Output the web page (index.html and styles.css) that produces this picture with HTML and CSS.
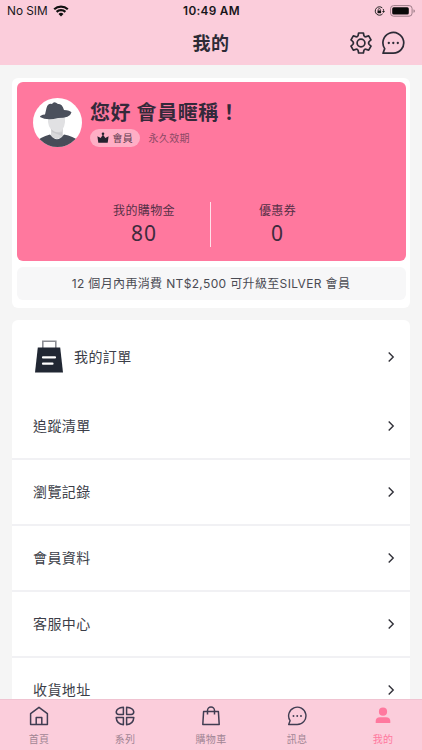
FILE: index.html
```html
<!DOCTYPE html>
<html lang="zh-Hant">
<head>
<meta charset="utf-8">
<title>我的</title>
<link rel="stylesheet" href="styles.css">
</head>
<body>
<svg class="defs" width="0" height="0">
  <symbol id="chat" viewBox="0 0 24 24"><path d="M12.3 22.2A10.4 10.4 0 1 0 3.7 17.6L2 22.2Z" fill="none" stroke="currentColor" stroke-width="1.7" stroke-linejoin="round"/><g fill="currentColor"><circle cx="7.8" cy="12" r="1.15"/><circle cx="12.3" cy="12" r="1.15"/><circle cx="16.8" cy="12" r="1.15"/></g></symbol>
  <symbol id="chevron" viewBox="0 0 8 12"><path d="M1.7 1.6L6.2 6L1.7 10.4" fill="none" stroke="currentColor" stroke-width="1.4"/></symbol>
</svg>
<div class="screen">
  <header class="header">
    <div class="status">
      <div class="carrier"><span>No SIM</span>
        <svg width="16" height="12" viewBox="0 0 16 12"><path d="M1.2 4.3a9.8 9.8 0 0 1 13.6 0M3.6 6.9a6.3 6.3 0 0 1 8.8 0" fill="none" stroke="#111" stroke-width="2.2"/><path d="M5.5 9a3.7 3.7 0 0 1 5 0L8 11.6z" fill="#111"/></svg>
      </div>
      <div class="time">10:49 AM</div>
      <div class="power">
        <svg width="11" height="10" viewBox="0 0 11 10"><path d="M8.3 1.9A4.2 4.2 0 1 0 8.6 7.8M9.3 3.1a4.2 4.2 0 0 1 .2 2.5" fill="none" stroke="#222" stroke-width="1"/><path d="M8 5h3L9.5 7z" fill="#222"/><rect x="3.5" y="4.5" width="3.6" height="2.7" fill="#111"/><path d="M4.2 4.7V3.6a1.1 1.1 0 0 1 2.2 0v1.1" fill="none" stroke="#111" stroke-width=".7"/></svg>
        <svg width="26" height="12" viewBox="0 0 26 12"><rect x=".6" y=".6" width="21.5" height="10.6" rx="3" fill="none" stroke="#9b7b87"/><rect x="2.2" y="2.2" width="16.6" height="7.4" rx="1.5" fill="#080808"/><path d="M23.5 4.2q1.4.4 1.4 1.8t-1.4 1.8z" fill="#9b7b87"/></svg>
      </div>
    </div>
    <div class="navbar">
      <h1>我的</h1>
      <div class="actions">
        <svg width="22" height="22" viewBox="0 0 22 22" fill="none" stroke="currentColor" stroke-width="1.7" stroke-linejoin="round"><path d="M8.6 1H13.4L13.9 3.7Q14.8 5.3 16.3 4.6L18.7 3.8L21 7.8L19.2 9.5Q18 11 19.2 12.5L21 14.2L18.7 18.2L16.3 17.4Q14.8 16.7 13.9 18.3L13.4 21H8.6L8.1 18.3Q7.2 16.7 5.7 17.4L3.3 18.2L1 14.2L2.8 12.5Q4 11 2.8 9.5L1 7.8L3.3 3.8L5.7 4.6Q7.2 5.3 8.1 3.7Z"/><circle cx="11" cy="11" r="3.9"/></svg>
        <svg width="24" height="24"><use href="#chat"/></svg>
      </div>
    </div>
  </header>
  <main class="content">
    <section class="member">
      <div class="hero">
        <div class="profile">
          <svg class="avatar" width="49" height="49" viewBox="0 0 49 49"><defs><clipPath id="round"><circle cx="24.5" cy="24.5" r="24.5"/></clipPath></defs><g clip-path="url(#round)"><path fill="#fff" d="M0 0h49v49H0z"/><path d="M18 30h12v8q-6 6-12 0z" fill="#d8d8da"/><path d="M15 17H32V24Q31 34 24 34.5Q16 33 15 24Z" fill="#e1e1e3"/><path d="M18 31q5 5 11 3v4l-10-4z" fill="#cacacd"/><path d="M3 44Q7 39 17 36.5Q24 46 31 36.5Q40 38 46 43V49H3Z" fill="#474c58"/><path d="M7 19Q7 17 12 16.5L13.5 10Q15 5 19 6Q21 2.5 25 6Q29 5 31 12Q37 12 38.5 14.5Q37 20 25 20Q14 23 7 19Z" fill="#4b505c"/></g></svg>
          <div class="identity">
            <div class="greeting">您好 會員暱稱！</div>
            <div class="level">
              <span class="badge"><svg width="12" height="12" viewBox="0 0 12 12" fill="#24212e"><circle cx="6" cy="1.8" r="1.3"/><path d="M.4 4.2L3.7 6L6 2.6L8.3 6L11.6 4.2L10.7 10.8H1.3z"/></svg>會員</span>
              <span class="valid">永久效期</span>
            </div>
          </div>
        </div>
        <div class="stats">
          <div class="stat"><span>我的購物金</span><b>80</b></div>
          <div class="stat"><span>優惠券</span><b>0</b></div>
        </div>
      </div>
      <div class="notice">12 個月內再消費 NT$2,500 可升級至SILVER 會員</div>
    </section>
    <nav class="list">
      <a class="row orders"><svg class="bag" width="28" height="33" viewBox="0 0 28 33"><path d="M7.8 8V1.2h13V8" fill="none" stroke="#8c8e94" stroke-width="1.6"/><path d="M2.8 7.5H25.2L28 32.5H0Z" fill="#212733"/><path d="M8 17.4h12M8 23.7h9.5" stroke="#fff" stroke-width="2.2" stroke-linecap="round"/></svg><span>我的訂單</span><svg class="go"><use href="#chevron"/></svg></a>
      <a class="row"><span>追蹤清單</span><svg class="go"><use href="#chevron"/></svg></a>
      <a class="row"><span>瀏覽記錄</span><svg class="go"><use href="#chevron"/></svg></a>
      <a class="row"><span>會員資料</span><svg class="go"><use href="#chevron"/></svg></a>
      <a class="row"><span>客服中心</span><svg class="go"><use href="#chevron"/></svg></a>
      <a class="row"><span>收貨地址</span><svg class="go"><use href="#chevron"/></svg></a>
    </nav>
  </main>
  <footer class="tabs">
    <a class="tab"><svg width="20" height="20" viewBox="0 0 20 20" fill="none" stroke="currentColor" stroke-width="1.5" stroke-linejoin="round"><path d="M1.6 18.5V7.7L10 1.3L18.4 7.7V18.5ZM7.2 18.5V11.5H12.8V18.5"/></svg><span>首頁</span></a>
    <a class="tab"><svg width="20" height="20" viewBox="0 0 20 20" fill="none" stroke="currentColor" stroke-width="1.5" stroke-linejoin="round"><path d="M8.4 8.4H3.8A2.6 2.6 0 0 1 1.2 5.800Q1.700 2 8.400 1.300ZM11.600 8.400V1.300Q18.300 2 18.800 5.800A2.600 2.600 0 0 1 16.200 8.400ZM8.400 11.600V18.700Q1.700 18.200 1.200 11.600ZM11.600 11.600H18.800Q18.300 18.200 11.600 18.700Z"/></svg><span>系列</span></a>
    <a class="tab"><svg width="20" height="20" viewBox="0 0 20 20" fill="none" stroke="currentColor" stroke-width="1.5" stroke-linejoin="round"><path d="M2.6 5.5H17.4L18.2 18.5H1.8ZM6.5 8.5V4.5A3.5 3.5 0 0 1 13.5 4.5V8.5"/></svg><span>購物車</span></a>
    <a class="tab"><svg width="20" height="20"><use href="#chat"/></svg><span>訊息</span></a>
    <a class="tab active"><svg width="20" height="20" viewBox="0 0 20 20" fill="currentColor"><circle cx="10" cy="5.7" r="4.1"/><path d="M2.7 17V15Q2.7 11.2 7 11.2H13Q17.3 11.2 17.3 15V17Z"/></svg><span>我的</span></a>
  </footer>
</div>
</body>
</html>
```
FILE: styles.css
```css
* { box-sizing: border-box; }
body { margin: 0; font-family: Inter, "Noto Sans CJK TC", sans-serif; color: #3c3e48; background: #f5f5f5; }
svg { display: block; flex: none; }
.defs { position: absolute; }
.screen { height: 750px; display: flex; flex-direction: column; overflow: hidden; }
.header { height: 65px; flex: none; background: #fbcddb; }
.status { height: 22px; display: grid; grid-template-columns: 1fr auto 1fr; align-items: center; padding: 0 6px 0 7px; font-size: 11.8px; line-height: 22px; color: #17151a; }
.carrier { display: flex; align-items: center; gap: 5px; }
.carrier svg { margin-top: -1px; }
.time { font-weight: 600; letter-spacing: .3px; }
.power { display: flex; justify-content: flex-end; align-items: center; gap: 5px; }
.navbar { height: 43px; display: grid; grid-template-columns: 1fr auto 1fr; align-items: center; padding: 0 17px; color: #2c2b36; }
h1 { grid-column: 2; margin: 0; font-size: 18px; line-height: 26px; font-weight: 700; letter-spacing: .4px; }
.actions { display: flex; justify-content: flex-end; align-items: center; gap: 9px; padding-bottom: 1px; }
.content { flex: 1; min-height: 0; overflow: hidden; padding: 13px 12px 0; }
.member { height: 230px; padding: 4px 4.5px; background: #fff; border-radius: 6px; }
.hero { height: 179px; background: #ff789e; border-radius: 6px; padding: 16px 16.5px; }
.profile { display: flex; gap: 8px; height: 104px; }
.identity { display: flex; flex-direction: column; }
.greeting { height: 31px; line-height: 30px; font-size: 20px; font-weight: 700; letter-spacing: .6px; color: #34293a; white-space: nowrap; }
.level { display: flex; align-items: center; gap: 9px; font-size: 10px; line-height: 14px; letter-spacing: .3px; color: #8c4965; }
.valid { padding-bottom: 1px; }
.badge { height: 18px; display: flex; align-items: center; gap: 4px; padding: 0 6.5px 1px; border-radius: 9px; background: #ffaec5; color: #5c3a4e; }
.stats { display: flex; width: 266px; margin-left: 42.5px; }
.stat { width: 134px; height: 45px; display: flex; flex-direction: column; align-items: center; padding-left: 3px; color: #563047; }
.stat + .stat { border-left: 1.5px solid #ffe0e9; width: 132px; }
.stat span { font-size: 12px; line-height: 17px; letter-spacing: .4px; }
.stat b { font-family: "Noto Sans", sans-serif; font-weight: 400; font-size: 21px; line-height: 29px; letter-spacing: 1px; color: #402b3d; }
.notice { height: 33px; margin-top: 6px; border-radius: 6px; background: #f7f7f8; text-align: center; font-size: 12px; line-height: 33px; letter-spacing: .35px; color: #4a4b53; white-space: nowrap; }
.list { margin-top: 12px; background: #fff; border-radius: 6px 6px 0 0; }
.row { height: 66px; display: flex; align-items: center; padding: 0 15px 0 21px; font-size: 14px; letter-spacing: .4px; border-bottom: 2px solid #f1f1f4; }
.row span { padding-bottom: 2px; }
.row .go { color: #303038; }
.orders { height: 74px; border: 0; padding-left: 23px; }
.bag { margin: 0 11px 2px 0; }
.go { width: 8px; height: 12px; margin-left: auto; }
.tabs { height: 51px; flex: none; display: flex; background: #fbcddb; border-top: 1px solid #f0c3d1; margin: 0 -4px; color: #403d52; }
.tab { flex: 1; display: flex; flex-direction: column; align-items: center; padding-top: 6px; gap: 6px; }
.tab span { font-size: 10px; line-height: 15px; letter-spacing: .3px; color: #a18594; }
.active, .tab.active span { color: #ff789e; }
```
